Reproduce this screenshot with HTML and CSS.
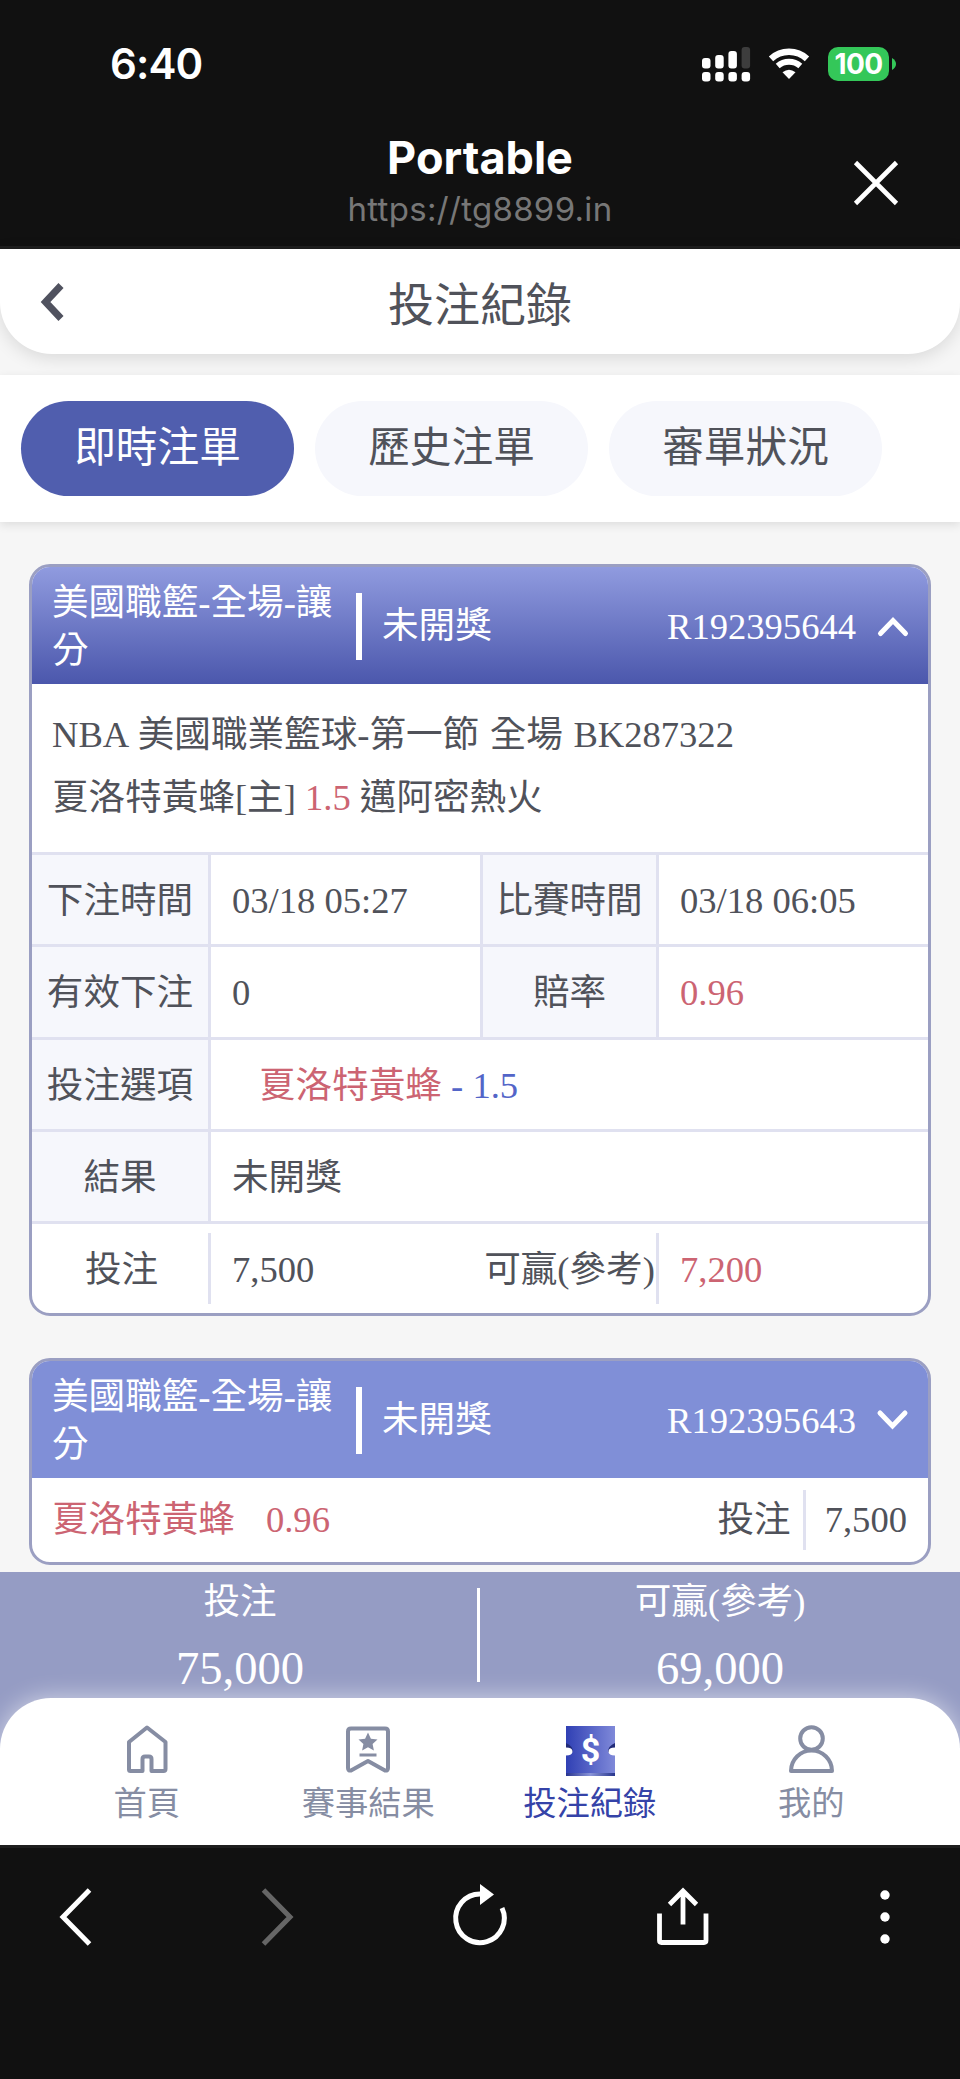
FILE: index.html
```html
<!DOCTYPE html>
<html lang="zh-Hant">
<head>
<meta charset="utf-8">
<title>投注紀錄</title>
<link rel="stylesheet" href="styles.css">
</head>
<body>
<div class="phone">
  <header class="browser-top">
    <div class="status">
      <span class="clock">6:40</span>
      <div class="status-icons">
        <svg class="signal" width="48" height="36" viewBox="0 0 48 36">
          <g fill="#fff">
            <rect x="0" y="12" width="8.5" height="10.5" rx="3"/><rect x="13.2" y="9" width="8.5" height="13.5" rx="3"/><rect x="26.4" y="5" width="8.5" height="17.5" rx="3"/>
            <rect x="0" y="26" width="8.5" height="9.5" rx="3"/><rect x="13.2" y="26" width="8.5" height="9.5" rx="3"/><rect x="26.4" y="26" width="8.5" height="9.5" rx="3"/><rect x="39.6" y="26" width="8.5" height="9.5" rx="3"/>
          </g>
          <rect x="39.6" y="1" width="8.5" height="21.5" rx="3" fill="#3d3d3d"/>
        </svg>
        <svg class="wifi" width="42" height="32" viewBox="0 0 42 32">
          <path d="M3 10.8A26.5 26.5 0 0 1 39 10.8" fill="none" stroke="#fff" stroke-width="6.4"/>
          <path d="M9.7 18A17.5 17.5 0 0 1 32.3 18" fill="none" stroke="#fff" stroke-width="6"/>
          <path d="M14.5 24.3Q21 19.2 27.5 24.3L21 31Z" fill="#fff"/>
        </svg>
        <span class="battery">100</span>
        <svg width="4" height="12" viewBox="0 0 4 12"><path d="M0 0Q4 2.5 4 6T0 12Z" fill="#34c759"/></svg>
      </div>
    </div>
    <div class="address">
      <div class="site">
        <div class="site-name">Portable</div>
        <div class="site-url">https://tg8899.in</div>
      </div>
      <svg class="close" width="46" height="46" viewBox="0 0 46 46"><path d="M2.5 2.5L43.5 43.5M43.5 2.5L2.5 43.5" stroke="#fff" stroke-width="4.6"/></svg>
    </div>
  </header>

  <main class="page">
    <div class="title-bar">
      <svg class="back" width="26" height="40" viewBox="0 0 26 40"><path d="M23 3.5L7.500 20L23 36.500" fill="none" stroke="#50525f" stroke-width="7"/></svg>
      <h1>投注紀錄</h1>
    </div>
    <nav class="tabs">
      <a class="tab active">即時注單</a>
      <a class="tab">歷史注單</a>
      <a class="tab">審單狀況</a>
    </nav>

    <section class="card">
      <div class="card-head open">
        <div class="game">美國職籃-全場-讓分</div>
        <div class="state">未開獎</div>
        <div class="order">R192395644</div>
        <svg class="toggle" width="32" height="24" viewBox="0 0 32 24"><path d="M3.500 18.500L16 5.500L28.500 18.500" fill="none" stroke="#fff" stroke-width="5" stroke-linecap="round"/></svg>
      </div>
      <div class="match">
        <div class="league">NBA 美國職業籃球-第一節 全場 BK287322</div>
        <div>夏洛特黃蜂[主] <span class="red">1.5</span> 邁阿密熱火</div>
      </div>
      <div class="detail">
        <div class="label">下注時間</div><div class="value ruled">03/18 05:27</div><div class="label">比賽時間</div><div class="value">03/18 06:05</div>
        <div class="label">有效下注</div><div class="value ruled">0</div><div class="label">賠率</div><div class="value red">0.96</div>
        <div class="label">投注選項</div><div class="value wide pick"><span class="red">夏洛特黃蜂</span><span class="blue">&nbsp;- 1.5</span></div>
        <div class="label">結果</div><div class="value wide">未開獎</div>
        <div class="label plain">投注</div><div class="value">7,500</div><div class="label plain win">可贏(參考)</div><div class="value red">7,200</div>
      </div>
    </section>

    <section class="card">
      <div class="card-head">
        <div class="game">美國職籃-全場-讓分</div>
        <div class="state">未開獎</div>
        <div class="order">R192395643</div>
        <svg class="toggle" width="32" height="24" viewBox="0 0 32 24"><path d="M3 4L15.500 17L28 4" fill="none" stroke="#fff" stroke-width="5" stroke-linecap="round"/></svg>
      </div>
      <div class="brief">
        <span class="red">夏洛特黃蜂</span>
        <span class="red odds">0.96</span>
        <span class="stake">投注</span>
        <span class="amount">7,500</span>
      </div>
    </section>

    <div class="totals">
      <div class="total"><div class="total-label">投注</div><div class="total-value">75,000</div></div>
      <div class="total"><div class="total-label">可贏(參考)</div><div class="total-value">69,000</div></div>
    </div>

    <nav class="app-nav">
      <a class="item">
        <svg width="52" height="52" viewBox="0 0 52 52"><path d="M26 4.500L8 19V46.500Q8 48 9.500 48H21.500V36Q21.500 33.500 24 33.500H28Q30.500 33.500 30.500 36V48H42.500Q44.500 48 44.500 46V19Z" fill="none" stroke="#868da3" stroke-width="4" stroke-linejoin="round"/></svg>
        <span>首頁</span>
      </a>
      <a class="item">
        <svg width="52" height="52" viewBox="0 0 52 52"><path d="M9 5.500H43Q46 5.500 46 8.500V45Q46 48 43 47.500L26 38L9 47.500Q6 48 6 45V8.500Q6 5.500 9 5.500Z" fill="none" stroke="#868da3" stroke-width="4" stroke-linejoin="round"/><path d="M26 9.500L28.900 15.700L35.500 16.500L30.600 21L31.900 27.500L26 24.300L20.100 27.500L21.400 21L16.500 16.500L23.100 15.700Z" fill="#868da3"/><path d="M17.500 32H34.500" stroke="#868da3" stroke-width="3"/></svg>
        <span>賽事結果</span>
      </a>
      <a class="item current">
        <svg width="52" height="52" viewBox="0 0 52 52">
          <defs>
            <linearGradient id="ticket" x1="0" x2="1"><stop offset="0" stop-color="#3040b4"/><stop offset="1" stop-color="#7f89d9"/></linearGradient>
            <linearGradient id="ticketEdge" x1="0" x2="1"><stop offset="0" stop-color="#28348f"/><stop offset=".5" stop-color="#8994d8"/><stop offset="1" stop-color="#27358b"/></linearGradient>
          </defs>
          <rect x="2" y="3" width="49" height="50" fill="url(#ticket)"/>
          <rect x="2" y="50" width="49" height="3" fill="url(#ticketEdge)"/>
          <path d="M2 20Q9 23 9 29H2ZM51 20Q44 23 44 29H51Z" fill="#222b78"/>
          <path d="M2 24.500Q8.500 24.500 8.500 28.500T2 32.500ZM51 24.500Q44.500 24.500 44.500 28.500T51 32.500Z" fill="#fff"/>
          <text class="dollar" x="26.500" y="38.500" text-anchor="middle">$</text>
        </svg>
        <span>投注紀錄</span>
      </a>
      <a class="item">
        <svg width="52" height="52" viewBox="0 0 52 52"><g fill="none" stroke="#868da3" stroke-width="4" stroke-linejoin="round"><circle cx="26.500" cy="15.500" r="11.300"/><path d="M6 48A20.500 20.500 0 0 1 47 48Z"/></g></svg>
        <span>我的</span>
      </a>
    </nav>
  </main>

  <footer class="browser-bottom">
    <svg width="60" height="64" viewBox="0 0 60 64"><path d="M44.500 5L18 32L44.500 59" fill="none" stroke="#fff" stroke-width="5"/></svg>
    <svg width="60" height="64" viewBox="0 0 60 64"><path d="M15.500 5L42 32L15.500 59" fill="none" stroke="#666" stroke-width="5"/></svg>
    <svg width="60" height="64" viewBox="0 0 60 64"><path d="M30 9A24.300 24.300 0 1 0 52 23" fill="none" stroke="#fff" stroke-width="5"/><path d="M30 -1V20L44 9.500Z" fill="#fff"/></svg>
    <svg width="60" height="64" viewBox="0 0 60 64"><g fill="none" stroke="#fff" stroke-width="4.800"><path d="M6.500 28.500V55.500Q6.500 57.500 8.500 57.500H51Q53 57.500 53 55.500V28.500" /><path d="M30 39.500V7M16.500 19.500L30 6L43.500 19.500"/></g></svg>
    <svg width="60" height="64" viewBox="0 0 60 64"><g fill="#fff"><circle cx="30" cy="10" r="4.700"/><circle cx="30" cy="32" r="4.700"/><circle cx="30" cy="54" r="4.700"/></g></svg>
  </footer>
</div>
</body>
</html>
```

FILE: styles.css
```css
* { box-sizing: border-box; }

body {
  margin: 0;
  background: #111;
}

.phone {
  width: 960px;
  height: 2079px;
  display: flex;
  flex-direction: column;
  overflow: hidden;
  color: #50525a;
  font: 36.6px/48px "Liberation Serif", "Noto Sans CJK TC", serif;
}

svg { display: block; flex: none; overflow: visible; }

/* Browser chrome, top */
.browser-top {
  height: 249px;
  background: #111;
  border-bottom: 3px solid #1e1e1e;
  color: #fff;
  font-family: Inter, "Liberation Sans", sans-serif;
}

.status {
  height: 126px;
  padding: 2px 64px 0 110px;
  display: flex;
  align-items: center;
  justify-content: space-between;
}

.clock { font-size: 42px; font-weight: 600; letter-spacing: -.9px; }

.status-icons { display: flex; align-items: center; }
.wifi { margin-left: 18px; }

.battery {
  width: 61px;
  height: 34px;
  margin: 0 3px 0 18px;
  border-radius: 10px;
  background: #34c759;
  font-size: 28px;
  line-height: 34px;
  font-weight: 700;
  letter-spacing: -.6px;
  text-align: center;
}

.address {
  display: grid;
  grid-template-columns: 1fr 600px 1fr;
  padding-top: 6px;
}

.site { grid-column: 2; text-align: center; }
.site-name { font-size: 45px; line-height: 51px; font-weight: 700; }
.site-url { font-size: 33px; line-height: 52px; color: #777; letter-spacing: .3px; }
.close { margin: 28px 0 0 73px; }

/* App page */
.page {
  height: 1596px;
  background: #f6f6f6;
  display: flex;
  flex-direction: column;
}

.title-bar {
  height: 105px;
  background: #fff;
  border-radius: 0 0 52px 52px;
  box-shadow: 0 4px 18px rgba(0, 0, 0, .12);
  display: grid;
  grid-template-columns: 1fr auto 1fr;
  padding: 0 38px;
}

.back { margin-top: 33px; }

.title-bar h1 {
  margin: 0;
  padding-top: 32px;
  font-size: 46px;
  line-height: 50px;
  font-weight: 400;
}

.tabs {
  height: 147px;
  margin-top: 21px;
  padding: 26px 21px;
  background: #fff;
  box-shadow: 0 3px 9px rgba(0, 0, 0, .1);
  display: flex;
  gap: 21px;
}

.tab {
  width: 273px;
  border-radius: 48px;
  background: #f6f7fc;
  font-size: 41.7px;
  line-height: 94px;
  text-align: center;
}

.tab.active { background: #505eae; color: #fff; }

/* Bet cards */
.card {
  margin: 42px 29px 0;
  border: 3px solid #9b9fc2;
  border-radius: 21px;
  background: #fff;
  overflow: hidden;
  flex: none;
}

.card-head {
  height: 117px;
  padding: 2px 19px 0 20px;
  background: #808fd7;
  color: #fff;
  display: flex;
  align-items: center;
}

.card-head.open { background: linear-gradient(#909bdf, #4b57ac); }

.game { width: 304px; line-height: 48px; word-break: break-all; padding-right: 18px; }

.state {
  height: 67px;
  border-left: 6px solid #fff;
  padding-left: 20px;
  line-height: 66px;
}

.order { margin-left: auto; margin-right: 21px; }

.match { height: 168px; padding: 19px 20px 0; line-height: 63px; }
.league { word-spacing: 1.4px; }

.detail {
  display: grid;
  grid-template-columns: 179px 269px 179px 269px;
  grid-auto-rows: 92.25px;
  line-height: 92px;
}

.label {
  border-top: 3px solid #e0e1f0;
  border-right: 3px solid #e0e1f0;
  background: #f6f7fc;
  text-align: center;
  white-space: nowrap;
}

.ruled + .label, .win { border-left: 3px solid #e0e1f0; }

.value { border-top: 3px solid #e0e1f0; padding-left: 21px; }
.value.wide { grid-column: span 3; }
.value.pick { padding-left: 48px; }

.label.plain {
  border-right: 0;
  background: linear-gradient(#e0e1f0, #e0e1f0) right 9px / 3px 71px no-repeat;
}

.label.win { border-left: 0; }

.red { color: #cc6472; }
.blue { color: #5365c8; }

.brief {
  height: 84px;
  padding: 0 21px 0 20px;
  line-height: 86px;
  display: flex;
  align-items: center;
}

.odds { margin-left: 31px; }
.stake { margin-left: auto; }

.amount {
  height: 60px;
  margin-left: 12px;
  padding-left: 19px;
  border-left: 3px solid #e0e1f0;
  line-height: 60px;
}

/* Totals strip continues behind the rounded navigation */
.totals {
  height: 176px;
  margin-top: 7px;
  margin-bottom: -50px;
  background: #959cc4;
  color: #fff;
  display: grid;
  grid-template-columns: 480px 480px;
  flex: none;
  text-align: center;
}

.total-label { padding-top: 6px; }
.total-value { font-size: 46.6px; line-height: 56px; padding-top: 14px; }
.total:first-child { background: linear-gradient(#fff, #fff) right 16px / 3px 94px no-repeat; }

.app-nav {
  flex: 1;
  padding: 25px 38px 0 36px;
  background: #fff;
  border-radius: 51px 51px 0 0;
  box-shadow: 0 0 24px rgba(255, 255, 255, .6);
  display: grid;
  grid-template-columns: repeat(4, 1fr);
  color: #868da3;
  font-size: 33.3px;
  line-height: 40px;
  position: relative;
}

.item { display: flex; flex-direction: column; align-items: center; }
.item span { padding-top: 9px; }
.current { color: #3543a8; }
.dollar { font: 700 34px Roboto, "Liberation Sans", sans-serif; fill: #fff; }

/* Browser chrome, bottom */
.browser-bottom {
  flex: 1;
  padding: 37px 45px 0;
  background: #111;
  border-top: 3px solid #1e1e1e;
  display: flex;
  justify-content: space-between;
  position: relative;
  z-index: 1;
}
```
